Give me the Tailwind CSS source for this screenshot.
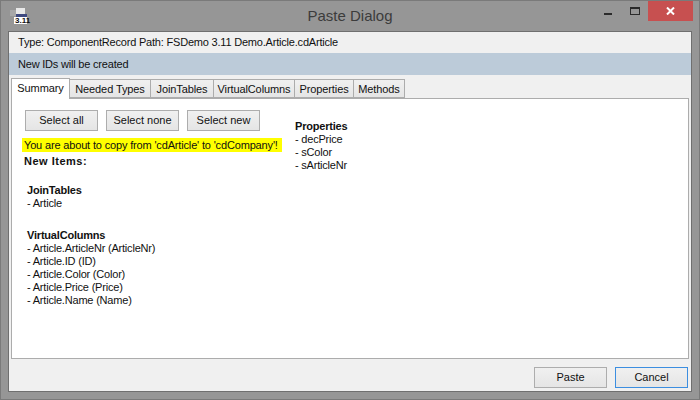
<!DOCTYPE html>
<html lang="en">
  <head>
    <meta charset="UTF-8" />
    <title>Paste Dialog</title>
    <script src="https://cdn.jsdelivr.net/npm/@tailwindcss/browser@4"></script>
  </head>
  <body class="w-[700px] h-[400px] overflow-hidden bg-[#969696] font-['Liberation_Sans',Arial,sans-serif] text-[11px] leading-[13px] text-[#111]">
    <div class="h-full flex flex-col border border-[#7a7a7a]">
      <!-- Title bar -->
      <div class="relative h-[30px] shrink-0 flex justify-center pt-[7px]">
        <svg class="absolute left-[9px] top-[6px]" width="18" height="17" viewBox="0 0 18 17">
          <rect x="0" y="3" width="7" height="6" fill="#a8a8a8" />
          <rect x="6" y="1" width="9" height="6" fill="#e8e8e8" />
          <rect x="6" y="7" width="11" height="4" fill="#3f4a80" />
          <rect x="4" y="10" width="13" height="7" fill="#ffffff" />
        </svg>
        <span class="absolute left-[14px] top-[16px] text-[8px] leading-[7px] font-bold text-[#111]">3.11</span>
        <span class="text-[15px] leading-[16px] text-[#3c3c3c]">Paste Dialog</span>
        <div class="absolute left-[603px] top-[12px] w-[8px] h-[2px] bg-[#2b2b2b]"></div>
        <div class="absolute left-[629px] top-[6px] w-[10px] h-[8px] border border-t-2 border-[#2b2b2b]"></div>
        <div class="absolute left-[647px] top-0 w-[45px] h-[20px] bg-[#c75050] flex items-center justify-center">
          <svg width="9" height="8" viewBox="0 0 9 8"><path d="M1 0.5 L8 7.5 M8 0.5 L1 7.5" stroke="#fff" stroke-width="2" /></svg>
        </div>
      </div>

      <!-- Client area -->
      <div class="flex-1 mx-[7px] mb-[7px] bg-[#f0f0f0] border border-[#6f6f6f] flex flex-col min-h-0">
        <div class="h-[21px] shrink-0 pl-[9px] flex items-center tracking-[-0.2px] whitespace-nowrap">Type: ComponentRecord Path: FSDemo 3.11 Demo.Article.cdArticle</div>
        <div class="h-[22px] shrink-0 pl-[9px] flex items-center bg-[#bccbd9] tracking-[-0.2px]">New IDs will be created</div>

        <!-- Tabs -->
        <div class="relative z-10 h-[23px] shrink-0 ml-[2px] flex items-end tracking-[-0.1px]">
          <div class="h-[21px] w-[59px] -mb-px bg-white border border-b-0 border-[#acacac] flex items-center justify-center pb-[2px]">Summary</div>
          <div class="h-[19px] w-[81px] pt-[2px] bg-linear-to-b from-[#f0f0f0] to-[#e5e5e5] border border-l-0 border-[#acacac] flex items-center justify-center">Needed Types</div>
          <div class="h-[19px] w-[63px] pt-[2px] bg-linear-to-b from-[#f0f0f0] to-[#e5e5e5] border border-l-0 border-[#acacac] flex items-center justify-center">JoinTables</div>
          <div class="h-[19px] w-[81px] pt-[2px] bg-linear-to-b from-[#f0f0f0] to-[#e5e5e5] border border-l-0 border-[#acacac] flex items-center justify-center">VirtualColumns</div>
          <div class="h-[19px] w-[59px] pt-[2px] bg-linear-to-b from-[#f0f0f0] to-[#e5e5e5] border border-l-0 border-[#acacac] flex items-center justify-center">Properties</div>
          <div class="h-[19px] w-[51px] pt-[2px] bg-linear-to-b from-[#f0f0f0] to-[#e5e5e5] border border-l-0 border-[#acacac] flex items-center justify-center">Methods</div>
        </div>

        <!-- Summary panel -->
        <div class="h-[261px] shrink-0 mx-[2px] bg-white border border-[#acacac] flex">
          <div class="w-[283px] shrink-0 pt-[11px]">
            <div class="flex gap-[8px] pl-[13px]">
              <div class="w-[73px] h-[21px] bg-linear-to-b from-[#f0f0f0] to-[#e5e5e5] border border-[#adadad] flex items-center justify-center">Select all</div>
              <div class="w-[73px] h-[21px] bg-linear-to-b from-[#f0f0f0] to-[#e5e5e5] border border-[#adadad] flex items-center justify-center">Select none</div>
              <div class="w-[73px] h-[21px] bg-linear-to-b from-[#f0f0f0] to-[#e5e5e5] border border-[#adadad] flex items-center justify-center">Select new</div>
            </div>
            <div class="mt-[7px] ml-[10px] w-[260px] h-[14px] pl-[2px] bg-[#ffff00] flex items-center whitespace-nowrap tracking-[-0.16px]">You are about to copy from 'cdArticle' to 'cdCompany'!</div>
            <div class="mt-[3px] ml-[12px] font-bold tracking-[0.5px]">New Items:</div>
            <div class="mt-[16px] ml-[15px] tracking-[-0.2px]">
              <div class="font-bold">JoinTables</div>
              <div>- Article</div>
            </div>
            <div class="mt-[19px] ml-[15px] tracking-[-0.2px]">
              <div class="font-bold">VirtualColumns</div>
              <div>- Article.ArticleNr (ArticleNr)</div>
              <div>- Article.ID (ID)</div>
              <div>- Article.Color (Color)</div>
              <div>- Article.Price (Price)</div>
              <div>- Article.Name (Name)</div>
            </div>
          </div>
          <div class="pt-[21px] tracking-[-0.2px]">
            <div class="font-bold">Properties</div>
            <div>- decPrice</div>
            <div>- sColor</div>
            <div>- sArticleNr</div>
          </div>
        </div>

        <!-- Footer buttons -->
        <div class="flex-1 flex justify-end items-start gap-[8px] pt-[8px] pr-[3px]">
          <div class="w-[73px] h-[21px] bg-linear-to-b from-[#f0f0f0] to-[#e5e5e5] border border-[#adadad] flex items-center justify-center">Paste</div>
          <div class="w-[73px] h-[21px] bg-linear-to-b from-[#f0f0f0] to-[#e5e5e5] border border-[#3c8ee0] flex items-center justify-center">Cancel</div>
        </div>
      </div>
    </div>
  </body>
</html>
